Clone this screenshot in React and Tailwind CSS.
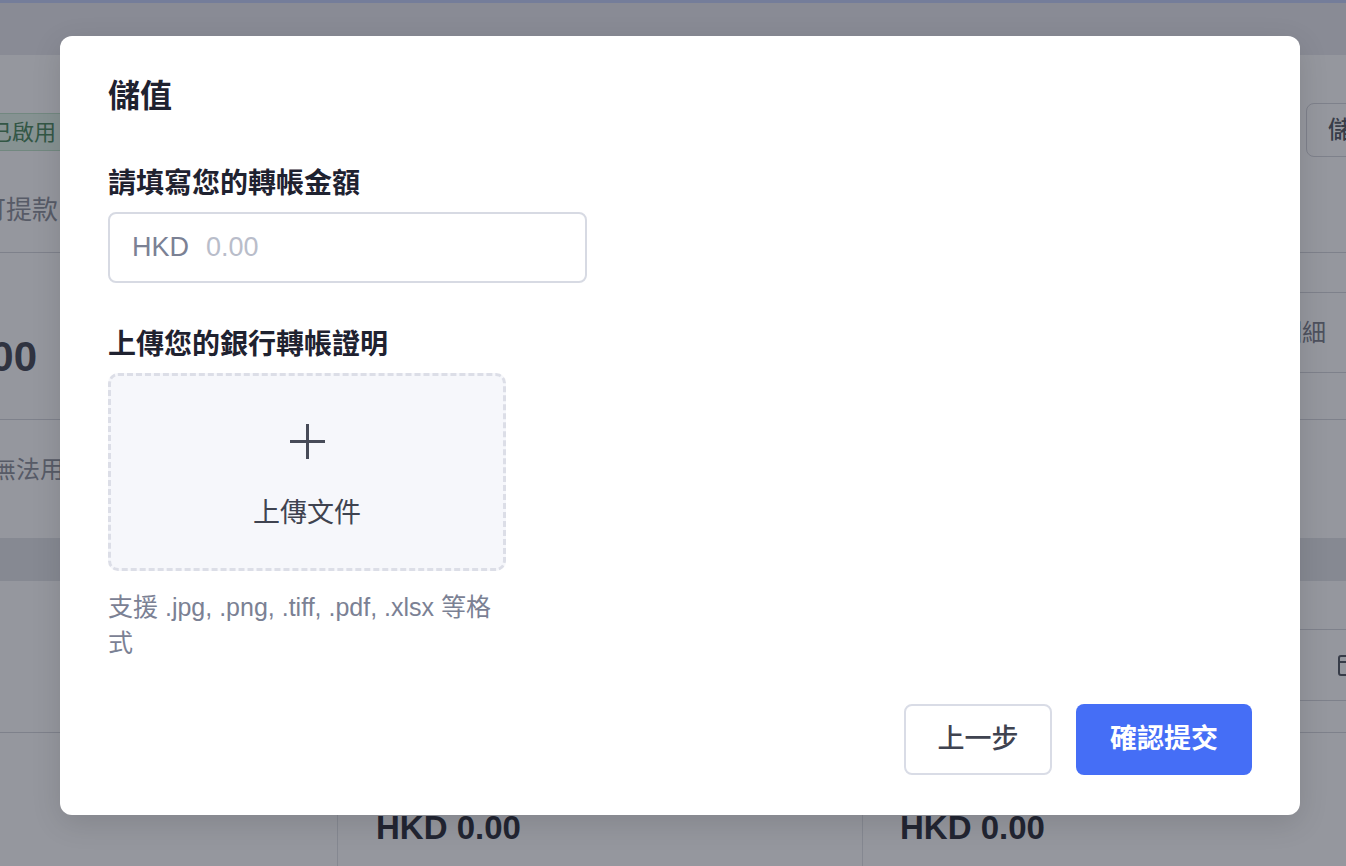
import React from "react"

// 背景頁（被遮罩蓋住的部分）
function LeftCol() {
  return (
    <div className="flex w-[64px] shrink-0 flex-col items-end">
      <div className="flex h-[198px] w-full flex-col items-end border-b border-[#d6d7dc]">
        <div className="mt-[58px] flex h-[38px] items-center whitespace-nowrap rounded-[6px] border border-[#bfe3c9] bg-[#e4f6e9] pl-[9px] pr-[9px] -mr-[2px] text-[22px] text-[#4d8a5e]">
          已啟用
        </div>
        <div className="mt-[43px] whitespace-nowrap pr-[6px] text-[26px] leading-[32px] text-[#8f929b]">
          可提款
        </div>
      </div>
      <div className="flex h-[167px] w-full flex-col items-end border-b border-[#d6d7dc]">
        <div className="whitespace-nowrap pr-[27px] pt-[82px] text-[42px] font-bold leading-[44px] text-[#474a55]">
          HKD 0.00
        </div>
      </div>
      <div className="flex h-[118px] w-full flex-col items-end">
        <div className="-mr-[24px] whitespace-nowrap pt-[34px] text-[24px] leading-[32px] text-[#8f929b]">
          無法用於
        </div>
      </div>
      <div className="h-[43px] w-full bg-[#e4e5ea]" />
      <div className="h-[152px] w-full border-b border-[#d6d7dc]" />
    </div>
  )
}

function RightCol() {
  return (
    <div className="flex w-[76px] shrink-0 flex-col">
      <div className="h-[198px] border-b border-[#d6d7dc] pl-[36px] pt-[48px]">
        <div className="flex h-[54px] w-[100px] items-center rounded-[8px] border border-[#d6d7dc] pl-[21px] text-[24px] font-medium text-[#555963]">
          儲值
        </div>
      </div>
      <div className="h-[40px] border-b border-[#d6d7dc]" />
      <div className="flex h-[80px] items-center border-b border-[#d6d7dc] pl-[8px] text-[24px] text-[#7d808a]">
        明細
      </div>
      <div className="h-[47px] border-b border-[#d6d7dc]" />
      <div className="h-[118px]" />
      <div className="h-[43px] bg-[#e4e5ea]" />
      <div className="h-[49px] border-b border-[#d6d7dc]" />
      <div className="flex h-[71px] items-center border-b border-[#d6d7dc] pl-[68px]">
        <svg className="shrink-0" width="22" height="22" viewBox="0 0 22 22" fill="none" stroke="#555963" strokeWidth="2">
          <rect x="1" y="2" width="20" height="19" rx="2" />
          <path d="M1 8h20" />
        </svg>
      </div>
      <div className="h-[32px] border-b border-[#d6d7dc]" />
    </div>
  )
}

function BackgroundPage() {
  return (
    <div className="flex h-full flex-col">
      <div className="h-[55px] shrink-0 border-t-[3px] border-[#c4cff7] bg-[#e9eaef]" />
      <div className="flex h-[678px] shrink-0">
        <LeftCol />
        <div className="flex-1" />
        <RightCol />
      </div>
      <div className="flex flex-1">
        <div className="w-[337px] shrink-0" />
        <div className="w-[525px] shrink-0 border-l border-[#e2e3e8] pl-[38px] pt-[75px] text-[33px] font-bold leading-[40px] text-[#2e313b]">
          HKD 0.00
        </div>
        <div className="flex-1 border-l border-[#e2e3e8] pl-[37px] pt-[75px] text-[33px] font-bold leading-[40px] text-[#2e313b]">
          HKD 0.00
        </div>
      </div>
    </div>
  )
}

function PlusIcon() {
  return (
    <svg width="35" height="35" viewBox="0 0 35 35" fill="none" stroke="#474b58" strokeWidth="3">
      <path d="M17.5 0v35M0 17.5h35" />
    </svg>
  )
}

// 儲值彈窗
function TopUpModal() {
  return (
    <div className="absolute left-[60px] top-[36px] flex w-[1240px] flex-col rounded-[12px] bg-white px-[48px] pb-[40px] pt-[40px] shadow-[0_8px_30px_rgba(0,0,0,0.12)]">
      <h2 className="text-[32px] font-bold leading-[40px] text-[#1f2230]">儲值</h2>

      <label className="mt-[50px] text-[28px] font-bold leading-[36px] text-[#1f2230]">請填寫您的轉帳金額</label>
      <div className="mt-[10px] flex h-[71px] w-[479px] items-center rounded-[8px] border-2 border-[#d7dae3] px-[22px]">
        <span className="text-[27px] text-[#7b8194]">HKD</span>
        <input
          className="ml-[17px] min-w-0 flex-1 bg-transparent text-[27px] text-[#1f2230] outline-none placeholder:text-[#b9bdca]"
          placeholder="0.00"
        />
      </div>

      <label className="mt-[44px] text-[28px] font-bold leading-[36px] text-[#1f2230]">上傳您的銀行轉帳證明</label>
      <div className="mt-[10px] flex h-[198px] w-[398px] flex-col items-center justify-center rounded-[10px] border-[3px] border-dashed border-[#dcdee7] bg-[#f6f7fb] pt-[10px]">
        <PlusIcon />
        <div className="mt-[36px] text-[27px] leading-[36px] text-[#3f4350]">上傳文件</div>
      </div>
      <p className="mt-[18px] w-[398px] text-[25px] leading-[36px] text-[#7b8194]">
        支援 .jpg, .png, .tiff, .pdf, .xlsx 等格式
      </p>

      <div className="mt-[43px] flex justify-end gap-[24px]">
        <button className="flex h-[71px] w-[148px] items-center justify-center rounded-[8px] border-2 border-[#d9dce6] bg-white text-[27px] font-medium text-[#3f4350]">
          上一步
        </button>
        <button className="flex h-[71px] w-[176px] items-center justify-center rounded-[8px] bg-[#456ef6] text-[27px] font-bold text-white">
          確認提交
        </button>
      </div>
    </div>
  )
}

export default function App() {
  return (
    <div className="relative h-[866px] w-full overflow-hidden bg-white font-['Liberation_Sans','Noto_Sans_CJK_TC',sans-serif]">
      <BackgroundPage />
      <div className="absolute inset-0 bg-[rgba(20,24,40,0.45)]" />
      <TopUpModal />
    </div>
  )
}
